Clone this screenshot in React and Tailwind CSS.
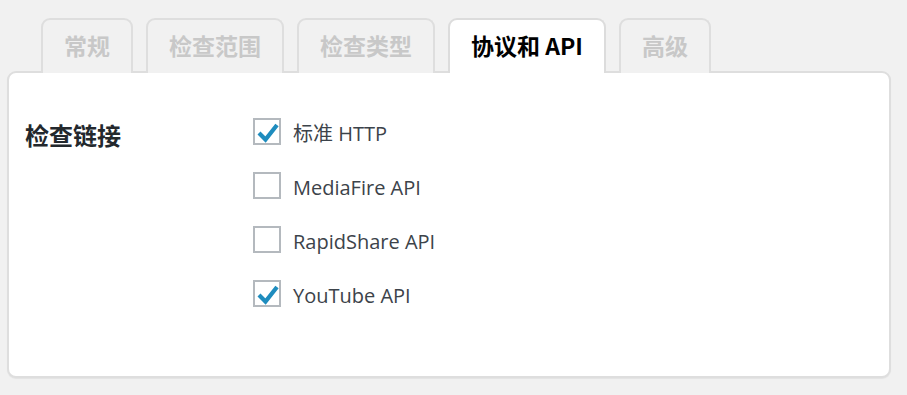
import React from "react";

const tabs = [
  { label: "常规", active: false },
  { label: "检查范围", active: false },
  { label: "检查类型", active: false },
  { label: "协议和 API", active: true },
  { label: "高级", active: false },
];

const items = [
  { label: "标准 HTTP", checked: true },
  { label: "MediaFire API", checked: false },
  { label: "RapidShare API", checked: false },
  { label: "YouTube API", checked: true },
];

function Box({ checked }) {
  return (
    <span className="relative flex h-[27px] w-[28px] shrink-0 items-center justify-center border-2 border-[#b4b9be] bg-white">
      {checked && (
        <svg width="24" height="22" viewBox="0 0 24 22" className="absolute left-[1px] top-[1px]">
          <path d="M3 12 L9.5 18.5 L21 4" fill="none" stroke="#1e8cbe" strokeWidth="4.2" strokeLinecap="butt" strokeLinejoin="miter" />
        </svg>
      )}
    </span>
  );
}

export default function App() {
  return (
    <div
      className="h-[395px] w-[907px] bg-[#f1f1f1] pl-[7px] pt-[18px]"
      style={{ fontFamily: '"Open Sans", "Noto Sans CJK SC", sans-serif' }}
    >
      <div className="relative z-10 flex h-[55px] gap-[13px] pl-[34px]">
        {tabs.map((t) => (
          <div
            key={t.label}
            className={
              "flex h-[55px] items-center justify-center rounded-t-[9px] border-2 border-b-0 px-[21px] pb-[2px] text-[23px] font-bold " +
              (t.active
                ? "border-[#dcdcdc] bg-white text-black"
                : "h-[54px] border-[#dedede] bg-[#f1f1f1] text-[#c8c8c8]")
            }
            style={{ fontFamily: '"Noto Sans CJK SC", "Open Sans", sans-serif' }}
          >
            {t.label}
          </div>
        ))}
      </div>
      <div className="-mt-[2px] h-[307px] w-[884px] rounded-[9px] border-2 border-[#dedede] bg-white shadow-[0_1px_1px_rgba(0,0,0,0.06)]">
        <div className="flex pl-[16px] pt-[44px]">
          <div
            className="w-[228px] pt-[4px] text-[24px] leading-[28px] font-bold text-[#23282d]"
            style={{ fontFamily: '"Noto Sans CJK SC", sans-serif' }}
          >
            检查链接
          </div>
          <div className="mt-[1px] flex flex-col gap-[27px]">
            {items.map((it) => (
              <div key={it.label} className="flex h-[27px] items-center gap-[12px]">
                <Box checked={it.checked} />
                <span className="translate-y-[2px] text-[20px] text-[#3c434a]">{it.label}</span>
              </div>
            ))}
          </div>
        </div>
      </div>
    </div>
  );
}
